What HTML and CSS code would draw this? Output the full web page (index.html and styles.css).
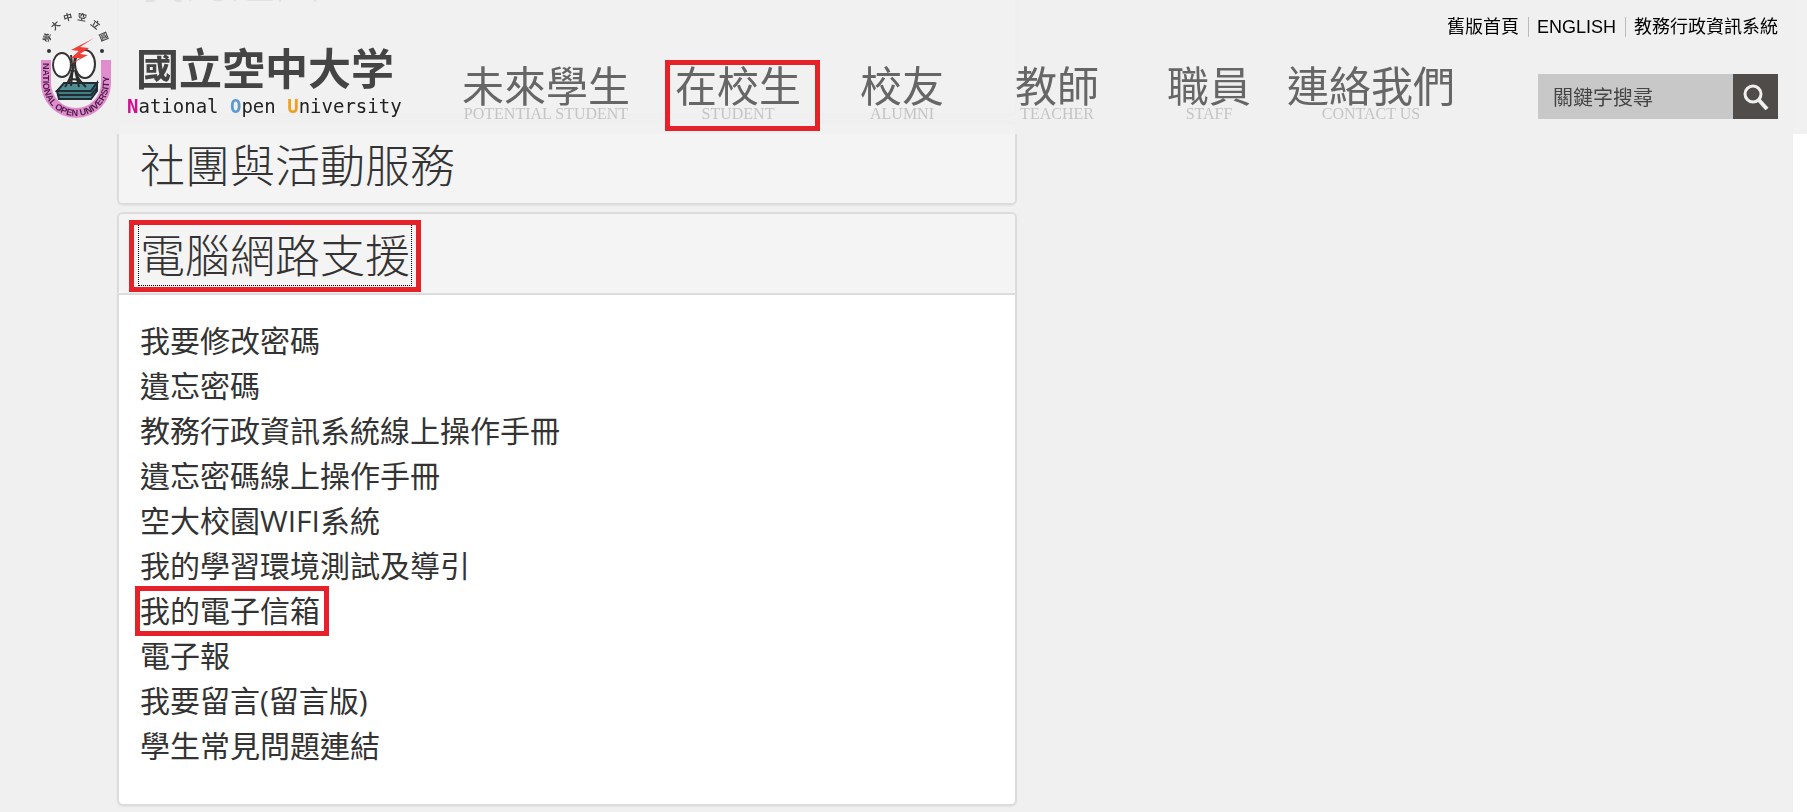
FILE: index.html
```
<!DOCTYPE html>
<html lang="zh-Hant">
<head>
  <meta charset="UTF-8">
  <title>國立空中大學</title>
  <link rel="stylesheet" href="styles.css">
</head>
<body>
  <header class="header">
    <a class="logo" href="#">
      <svg class="seal" viewBox="0 -6 80 116" width="80" height="116" aria-hidden="true">
        <defs>
          <path id="arc" d="M7 48 V71 A33 33 0 0 0 73 71 V48"/>
        </defs>
        <path d="M10 48 V71 A30 30 0 0 0 70 71 V48" fill="none" stroke="#e08ccd" stroke-width="10"/>
        <text class="seal-latin"><textPath href="#arc" startOffset="3">NATIONAL OPEN UNIVERSITY</textPath></text>
        <g class="seal-cjk">
          <text transform="translate(12 26) rotate(-72)">學</text>
          <text transform="translate(20 14) rotate(-42)">大</text>
          <text transform="translate(32 6) rotate(-14)">中</text>
          <text transform="translate(46 6) rotate(12)">空</text>
          <text transform="translate(59 13) rotate(38)">立</text>
          <text transform="translate(67 25) rotate(68)">國</text>
        </g>
        <circle cx="13" cy="39" r="2" fill="#333"/>
        <circle cx="66" cy="39" r="2" fill="#333"/>
        <path d="M28 71 H61 L55 79 H21 Z" fill="#4e8d94" stroke="#1f2d33" stroke-width="2"/>
        <path d="M21 79 H55 L61 71 V79 L55 87 H23 Z" fill="#437d86" stroke="#1f2d33" stroke-width="2"/>
        <path d="M21 83 H55 L61 76" fill="none" stroke="#1f2d33" stroke-width="2"/>
        <path d="M36 58 C35 66 32 70 29 75 M39 58 C41 66 45 70 50 75 M37 55 L35 74 M39 58 L43 75 M32 70 Q38 64 46 71" fill="none" stroke="#2b2b2b" stroke-width="2"/>
        <ellipse cx="26" cy="53" rx="9" ry="12" fill="#fff" stroke="#333" stroke-width="2"/>
        <ellipse cx="49" cy="52" rx="10" ry="14" fill="#fff" stroke="#333" stroke-width="2"/>
        <path d="M35 43 L37 60 L39 43" fill="none" stroke="#333" stroke-width="2"/>
        <path d="M58 26 L35 38 L43 39 L35 46 L44 46 L31 54 L52 43 L44 42 L53 36 L44 35 Z" fill="#ef3e35"/>
      </svg>
      <span class="logo-text">
        <span class="logo-name">國立空中大学</span>
        <span class="logo-en"><b class="n">N</b>ational <b class="o">O</b>pen <b class="u">U</b>niversity</span>
      </span>
    </a>

    <div class="header-main">
      <div class="top-links">
        <a href="#">舊版首頁</a>
        <a href="#">ENGLISH</a>
        <a href="#">教務行政資訊系統</a>
      </div>

      <div class="header-row">
        <nav class="nav">
          <a href="#">未來學生<small>POTENTIAL STUDENT</small></a>
          <a href="#" class="marked">在校生<small>STUDENT</small></a>
          <a href="#">校友<small>ALUMNI</small></a>
          <a href="#">教師<small>TEACHER</small></a>
          <a href="#">職員<small>STAFF</small></a>
          <a href="#">連絡我們<small>CONTACT US</small></a>
        </nav>

        <form class="search">
          <input type="text" name="q" placeholder="關鍵字搜尋" aria-label="關鍵字搜尋">
          <button type="submit" aria-label="搜尋">
            <svg viewBox="0 0 26 26" width="26" height="26" fill="none" stroke="#f0f0f0" stroke-width="3">
              <circle cx="10" cy="10" r="8"/>
              <path d="M15 15 L24 25" stroke-width="4"/>
            </svg>
          </button>
        </form>
      </div>
    </div>
  </header>

  <main class="page">
    <section class="card card-before">
      <h2><a href="#">我的證圖</a></h2>
    </section>

    <section class="card">
      <h2><a href="#">社團與活動服務</a></h2>
    </section>

    <section class="card">
      <h2><a href="#" class="marked focused">電腦網路支援</a></h2>
      <ul>
        <li><a href="#">我要修改密碼</a></li>
        <li><a href="#">遺忘密碼</a></li>
        <li><a href="#">教務行政資訊系統線上操作手冊</a></li>
        <li><a href="#">遺忘密碼線上操作手冊</a></li>
        <li><a href="#">空大校園WIFI系統</a></li>
        <li><a href="#">我的學習環境測試及導引</a></li>
        <li><a href="#" class="marked">我的電子信箱</a></li>
        <li><a href="#">電子報</a></li>
        <li><a href="#">我要留言(留言版)</a></li>
        <li><a href="#">學生常見問題連結</a></li>
      </ul>
    </section>
  </main>
</body>
</html>
```
FILE: styles.css
```
* {
  box-sizing: border-box;
}

body {
  margin: 0;
  background: #fff;
  color: #333;
  font-family: "Open Sans", "Noto Sans CJK TC", sans-serif;
}

a {
  color: inherit;
  text-decoration: none;
}

/* header */
.header {
  position: fixed;
  top: 0;
  left: 0;
  right: 0;
  z-index: 10;
  display: flex;
  height: 134px;
  padding: 0 29px 0 36px;
  background: rgba(240, 240, 240, 0.92);
}

.logo {
  display: flex;
  flex: 0 0 414px;
  gap: 11px;
  padding-top: 6px;
}

.seal {
  flex: none;
}

.seal-latin {
  font: bold 9px "Liberation Sans", sans-serif;
  fill: #4b1c46;
}

.seal-cjk text {
  font: bold 9px "Noto Sans CJK TC", sans-serif;
  fill: #444;
  text-anchor: middle;
  dominant-baseline: middle;
}

.logo-text {
  display: flex;
  flex-direction: column;
  padding-top: 30px;
}

.logo-name {
  padding-left: 9px;
  font: 700 43px/60px "Noto Sans CJK TC", sans-serif;
  color: #444;
}

.logo-en {
  font: 19px/20px "DejaVu Sans Mono", monospace;
  color: #222;
  white-space: nowrap;
}

.logo-en .n { color: #d0108c; }
.logo-en .o { color: #5b9bd0; }
.logo-en .u { color: #f0a020; }

.header-main {
  flex: 1;
}

.header-row {
  display: flex;
  align-items: flex-start;
  margin-top: 23px;
}

.nav {
  display: grid;
  grid-template-columns: 192px 192px 136px 174px 130px 194px;
}

.nav a {
  position: relative;
  height: 71px;
  padding-top: 3px;
  font: 42px/42px "Noto Sans CJK TC", sans-serif;
  color: #666;
  text-align: center;
  white-space: nowrap;
}

.nav small {
  display: block;
  font: 16px/18px "Liberation Serif", serif;
  color: #c4c4c4;
}

.top-links {
  display: flex;
  justify-content: flex-end;
  padding-top: 17px;
  font: 18px/20px "Liberation Sans", "Noto Sans CJK TC", sans-serif;
  color: #000;
}

.top-links a {
  height: 20px;
  padding-left: 8px;
  white-space: nowrap;
}

.top-links a + a {
  margin-left: 9px;
  border-left: 1px solid #bbb;
}

.search {
  display: flex;
  width: 240px;
  height: 45px;
  margin: 14px 0 0 auto;
}

.search input {
  flex: 1;
  min-width: 0;
  padding: 0 15px;
  border: 0;
  background: #c8c8c8;
  color: #444;
  font: 20px "Noto Sans CJK TC", sans-serif;
}

.search input::placeholder {
  color: #444;
  opacity: 1;
}

.search button {
  display: flex;
  align-items: center;
  justify-content: center;
  width: 45px;
  padding: 0;
  border: 0;
  background: #504c4a;
  cursor: pointer;
}

/* content, already scrolled under the header */
.page {
  display: flow-root;
  min-height: 100vh;
  margin-right: 14px;
  padding-left: 117px;
  background: #f0f0f0;
}

.card {
  width: 900px;
  max-width: 100%;
  margin-bottom: 7px;
  border: 2px solid #dcdcdc;
  border-radius: 6px;
  background: #fff;
  box-shadow: 0 1px 2px rgba(0, 0, 0, 0.05);
}

.card-before {
  margin-top: -62px;
  padding-bottom: 94px;
}

.card h2 {
  display: flex;
  align-items: center;
  height: 79px;
  margin: 0;
  padding-left: 20px;
  border-radius: 4px;
  background: #f4f4f4;
  font: 300 45px/62px "Noto Sans CJK TC", sans-serif;
}

.card h2 a {
  position: relative;
  padding: 0 1px;
}

.card ul {
  margin: 0;
  padding: 23px 20px 36px 21px;
  border-top: 2px solid #dcdcdc;
  list-style: none;
  font-size: 30px;
  line-height: 45px;
}

.card li {
  height: 45px;
}

.card li a {
  position: relative;
}

.focused {
  outline: 1px dotted #000;
}

/* red frames round the steps to follow */
.marked::after {
  content: "";
  position: absolute;
  border: 5px solid #e62129;
}

.nav .marked::after {
  inset: 0 14px 0 23px;
}

.card h2 .marked::after {
  inset: -3px -10px -7px;
}

.card li .marked::after {
  inset: -4px -9px -5px -5px;
}
```
